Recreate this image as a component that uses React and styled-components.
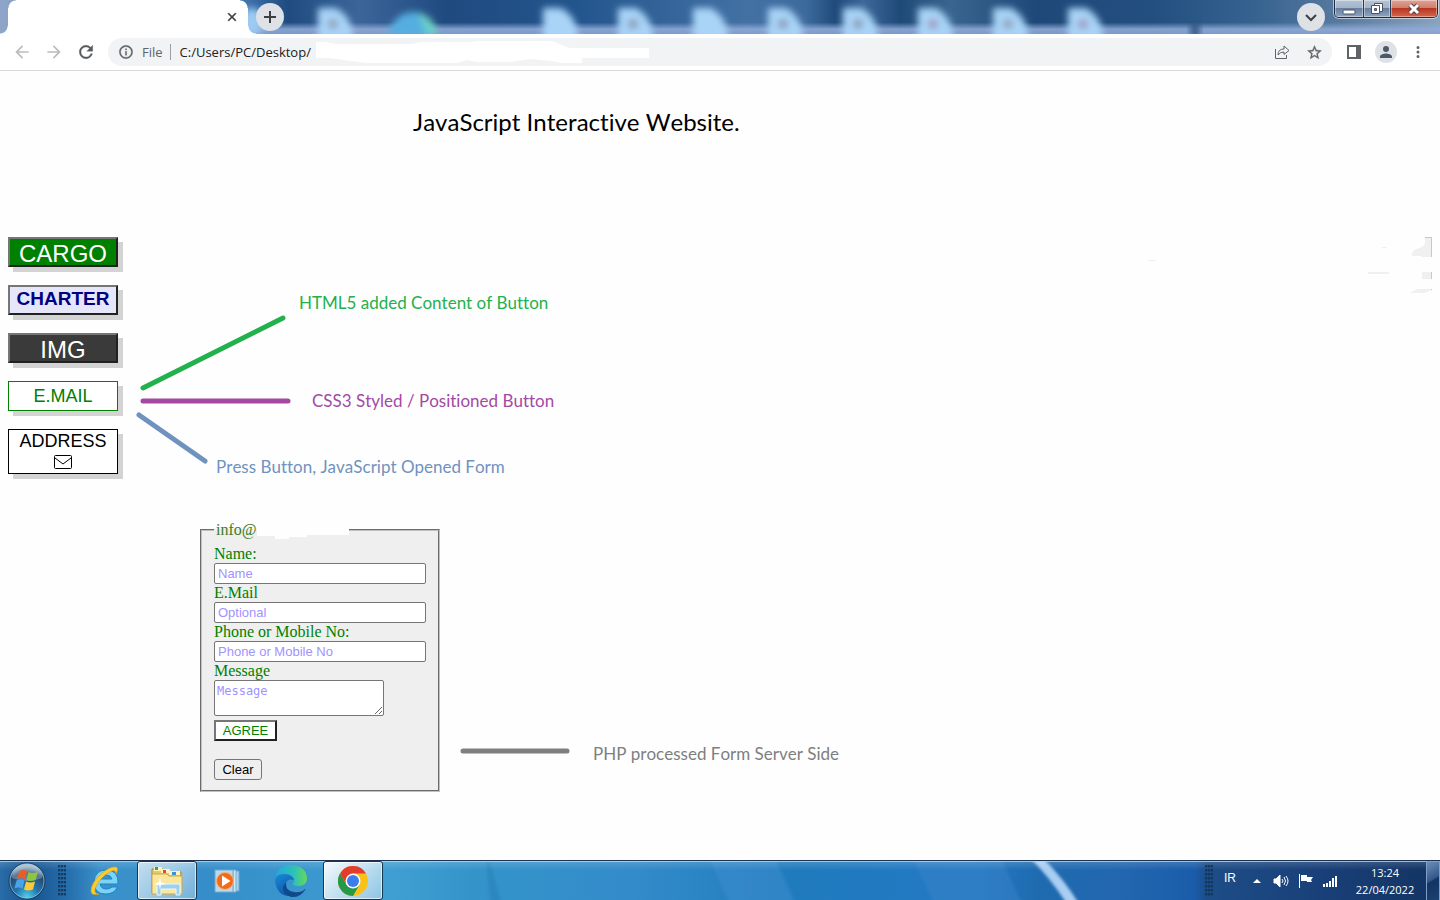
import React from "react";
import styled, { createGlobalStyle, css } from "styled-components";

const sans = `"Liberation Sans", Arial, sans-serif`;
const serif = `"Liberation Serif", "Times New Roman", serif`;
const ui = `"Open Sans", "Noto Sans", sans-serif`;
const note = `Lato, sans-serif`;

const GlobalStyle = createGlobalStyle`
  * { box-sizing: border-box; }
  body { margin: 0; background: #fefefe; font-family: ${serif}; }
  button, input, textarea { margin: 0; }
`;

const Screen = styled.div`
  display: flex;
  flex-direction: column;
  min-height: 100vh;
`;

/* ---------- browser tab strip ---------- */

const Layered = styled.div`
  display: grid;
  grid-template-columns: minmax(0, 1fr);
  height: ${(p) => p.$height}px;
  overflow: hidden;
  > * { grid-area: 1 / 1; }
`;

const Scenery = styled.svg`
  display: block;
  width: 100%;
  height: 100%;
`;

const TabStrip = styled.header`
  position: relative;
  display: flex;
  align-items: flex-start;
`;

const TabShape = styled.div`
  display: flex;
  align-items: center;
  justify-content: flex-end;
  width: 256px;
  height: 34px;
  padding-right: 14px;
  background:
    radial-gradient(circle at 0 0, transparent 7px, #fff 8px) left bottom / 8px 8px no-repeat,
    radial-gradient(circle at 100% 0, transparent 7px, #fff 8px) right bottom / 8px 8px no-repeat,
    radial-gradient(circle at 8px 8px, #fff 7px, transparent 8px) 8px 0 / 8px 8px no-repeat,
    radial-gradient(circle at 0 8px, #fff 7px, transparent 8px) 240px 0 / 8px 8px no-repeat,
    linear-gradient(#fff, #fff) 16px 0 / 224px 34px no-repeat,
    linear-gradient(#fff, #fff) 8px 8px / 240px 26px no-repeat;
`;

const PlainButton = styled.button`
  display: flex;
  align-items: center;
  justify-content: center;
  width: ${(p) => p.$width || 32}px;
  height: ${(p) => p.$height || 28}px;
  padding: 0;
  border: 0;
  background: none;
  color: ${(p) => p.$color || "#5f6368"};
`;

const RoundButton = styled(PlainButton)`
  width: 28px;
  margin-top: 3px;
  border-radius: 50%;
  background: #dee1e6;
  color: #3c4043;
`;

const WindowSide = styled.div`
  display: flex;
  gap: 9px;
  margin-left: auto;
  padding-right: 2px;
`;

const WindowControls = styled.div`
  display: flex;
  height: 18px;
  border: 1px solid #1d2c43;
  border-top: 0;
  border-radius: 0 0 5px 5px;
  box-shadow: 0 0 0 1px rgba(255, 255, 255, 0.55);
  overflow: hidden;
`;

const WindowControl = styled(PlainButton)`
  height: 17px;
  background: linear-gradient(#b4c3d5 0, #a5b5c8 45%, #68809f 50%, #8fa6c0 100%);
  box-shadow: inset 0 0 0 1px rgba(255, 255, 255, 0.4);
  & + & { border-left: 1px solid #2b3a50; }
  ${(p) =>
    p.$close &&
    css`
      background: linear-gradient(#e0a295 0, #cf8070 45%, #b93621 50%, #d4664c 100%);
    `}
`;

/* ---------- browser toolbar ---------- */

const Toolbar = styled.div`
  display: flex;
  align-items: center;
  height: 37px;
  padding: 0 6px;
  border-bottom: 1px solid #d9dadb;
  background: #fff;
`;

const AddressBar = styled.div`
  display: flex;
  flex: 1;
  align-items: center;
  height: 28px;
  margin: 0 6px;
  padding: 0 2px 0 10px;
  border-radius: 14px;
  background: #f1f3f4;
  color: #5f6368;
  font: 13px/20px ${ui};
`;

const Scheme = styled.span`
  margin-left: 8px;
  padding-right: 7px;
  border-right: 1px solid #9aa0a6;
  line-height: 16px;
`;

const Url = styled.input`
  width: 136px;
  margin-left: 9px;
  padding: 0;
  border: 0;
  background: none;
  color: #202124;
  font: inherit;
`;

const Spacer = styled.div`
  flex: 1;
`;

/* ---------- web page ---------- */

const Page = styled.main`
  flex: 1;
  padding: 35px 8px 0;
`;

const noteText = css`
  font-family: ${note};
  font-kerning: none;
  font-variant-ligatures: none;
`;

const Title = styled.h1`
  margin: 0 0 99px 405px;
  color: #000;
  font-size: 24px;
  font-weight: 400;
  line-height: 32px;
  ${noteText}
`;

const Upper = styled.div`
  display: flex;
  align-items: flex-start;
`;

const Menu = styled.nav`
  display: flex;
  flex-direction: column;
  gap: 18px;
  width: 110px;
`;

const MenuButton = styled.button`
  display: flex;
  flex-direction: column;
  align-items: center;
  height: ${(p) => p.$height || 30}px;
  padding: 0;
  border: ${(p) => p.$border || "2px outset #767676"};
  background: ${(p) => p.$fill || "#fff"};
  box-shadow: 5px 5px 0 lightgray;
  color: ${(p) => p.$color || "#fff"};
  font: ${(p) => p.$font || "24px/30px"} ${sans};
  svg { flex: none; margin-top: 3px; }
`;

const Callouts = styled.div`
  display: flex;
  flex-direction: column;
  padding: 54px 0 0 17px;
`;

const Callout = styled.div`
  display: flex;
  align-items: ${(p) => p.$align || "flex-end"};
  gap: ${(p) => p.$gap}px;
  height: ${(p) => p.$height}px;
  color: ${(p) => p.$color};
  font-size: 17px;
  line-height: 24px;
  ${noteText}
  white-space: nowrap;
  svg { flex: none; display: block; }
`;

const Scraps = styled.svg`
  margin-left: auto;
`;

const Lower = styled.div`
  display: flex;
  align-items: flex-end;
  gap: 20px;
  margin: 42px 0 0 192px;
`;

const Fields = styled.fieldset`
  width: 240px;
  min-width: 0;
  margin: 0;
  padding: 6px 12px 10px;
  border: 2px groove #c0c0c0;
  background: #efefef;
  color: green;
  font: 16px/18px ${serif};
`;

const Legend = styled.legend`
  display: flex;
  padding: 0 0 0 2px;
  color: #3d7d1c;
`;

const Label = styled.label`
  display: block;
`;

const field = css`
  display: block;
  border: 1px solid #767676;
  border-radius: 2px;
  background: #fff;
  &::placeholder { color: #9f93ff; opacity: 1; }
`;

const TextInput = styled.input`
  ${field}
  width: 100%;
  height: 21px;
  padding: 1px 3px;
  font: 13px/16px ${sans};
`;

const MessageBox = styled.textarea`
  ${field}
  width: 170px;
  height: 36px;
  padding: 2px;
  font: 12px/16px "DejaVu Sans Mono", monospace;
  resize: both;
`;

const FormButton = styled.button`
  display: block;
  width: ${(p) => p.$width}px;
  height: 21px;
  margin-top: ${(p) => p.$top}px;
  padding: 0;
  border: ${(p) => (p.$raised ? "2px outset #767676" : "1px solid #767676")};
  border-radius: ${(p) => (p.$raised ? 0 : 3)}px;
  background: ${(p) => (p.$raised ? "#fff" : "#efefef")};
  color: ${(p) => (p.$raised ? "green" : "#000")};
  font: 13px/16px ${sans};
`;

/* ---------- taskbar ---------- */

const Taskbar = styled.footer`
  position: relative;
  display: flex;
  align-items: center;
  border-top: 1px solid #1b3350;
  box-shadow: inset 0 1px 0 rgba(190, 220, 245, 0.75);
`;

const StartButton = styled(PlainButton)`
  width: 54px;
  height: 38px;
  margin-right: 4px;
`;

const Grip = styled.div`
  width: 8px;
  height: 31px;
  background: radial-gradient(circle at 1px 1px, #12304f 1px, transparent 2px) 0 0 / 3px 4px;
  opacity: 0.8;
`;

const Apps = styled.div`
  display: flex;
  gap: 2px;
  margin-left: 9px;
`;

const AppButton = styled(PlainButton)`
  width: 60px;
  height: 39px;
  ${(p) =>
    p.$open &&
    css`
      border: 1px solid #16364f;
      border-radius: 3px;
      background: linear-gradient(135deg, rgba(255, 255, 255, ${p.$open}), rgba(225, 240, 250, ${p.$open / 2}));
      box-shadow: inset 0 0 0 1px rgba(255, 255, 255, 0.65);
    `}
`;

const Tray = styled.div`
  display: flex;
  align-items: center;
  margin-left: auto;
  color: #fff;
  font: 11px/17px ${ui};
`;

const Language = styled.span`
  width: 34px;
  padding: 0 0 6px 11px;
  font: 12px/16px ${sans};
`;

const Clock = styled.time`
  width: 60px;
  margin: 0 11px 0 12px;
  text-align: center;
`;

const ShowDesktop = styled(PlainButton)`
  width: 14px;
  height: 39px;
  border: 1px solid #7f9fc4;
  border-bottom: 0;
  background: linear-gradient(150deg, #6d8fb8 0, #35588c 45%, #123465 50%, #1b4272 100%);
`;

/* ---------- drawings ---------- */

const Icon = ({ size = 20, d, weight = 0 }) => (
  <svg width={size} height={size} viewBox="0 0 24 24" fill="currentColor" stroke="currentColor" strokeWidth={weight} aria-hidden="true">
    <path d={d} />
  </svg>
);

const paths = {
  back: "M20 11H7.83l5.59-5.59L12 4l-8 8 8 8 1.41-1.41L7.83 13H20v-2z",
  forward: "M4 11h12.17l-5.59-5.59L12 4l8 8-8 8-1.41-1.41L16.17 13H4v-2z",
  reload:
    "M17.65 6.35A7.96 7.96 0 0 0 12 4c-4.42 0-7.99 3.58-7.99 8s3.57 8 7.99 8c3.73 0 6.84-2.55 7.73-6h-2.08A5.99 5.99 0 0 1 12 18c-3.31 0-6-2.69-6-6s2.69-6 6-6c1.66 0 3.14.69 4.22 1.78L13 11h7V4l-2.35 2.35z",
  info: "M11 7h2v2h-2zm0 4h2v6h-2zm1-9C6.48 2 2 6.48 2 12s4.48 10 10 10 10-4.48 10-10S17.52 2 12 2zm0 18c-4.41 0-8-3.59-8-8s3.59-8 8-8 8 3.59 8 8-3.59 8-8 8z",
  star: "M22 9.24l-7.19-.62L12 2 9.19 8.63 2 9.24l5.46 4.73L5.82 21 12 17.27 18.18 21l-1.63-7.03L22 9.24zM12 15.4l-3.76 2.27 1-4.28-3.32-2.88 4.38-.38L12 6.1l1.71 4.04 4.38.38-3.32 2.88 1 4.28L12 15.4z",
  person: "M12 12a4 4 0 1 0 0-8 4 4 0 0 0 0 8zm0 2c-2.67 0-8 1.34-8 4v2h16v-2c0-2.66-5.33-4-8-4z",
  close: "M19 6.41L17.59 5 12 10.59 6.41 5 5 6.41 10.59 12 5 17.59 6.41 19 12 13.41 17.59 19 19 17.59 13.41 12z",
  dots: "M12 8a2 2 0 1 0 0-4 2 2 0 0 0 0 4zm0 2a2 2 0 1 0 0 4 2 2 0 0 0 0-4zm0 6a2 2 0 1 0 0 4 2 2 0 0 0 0-4z",
};

const desktopFiles = [
  [318, "#8d9db5"], [543], [618, "#8795b4"], [693], [768, "#8795b4"], [843, "#8795b4"],
  [918, "#a093c0"], [993, "#8d9db5"], [1068, "#a093c0"],
];

const StripScenery = () => (
  <Scenery viewBox="0 0 1440 34" preserveAspectRatio="none" aria-hidden="true">
    <defs>
      <linearGradient id="sky">
        <stop offset="0" stopColor="#8fa5ca" />
        <stop offset="0.17" stopColor="#3f73ac" />
        <stop offset="0.2" stopColor="#1f4b80" />
        <stop offset="0.25" stopColor="#3c669a" />
        <stop offset="0.31" stopColor="#1f4a80" />
        <stop offset="0.4" stopColor="#23558d" />
        <stop offset="0.52" stopColor="#4371a4" />
        <stop offset="0.56" stopColor="#3d6a9d" />
        <stop offset="0.58" stopColor="#1f4b7b" />
        <stop offset="0.6" stopColor="#3d6799" />
        <stop offset="0.625" stopColor="#1e4a78" />
        <stop offset="0.66" stopColor="#39658f" />
        <stop offset="0.72" stopColor="#1e4878" />
        <stop offset="0.8" stopColor="#234f80" />
        <stop offset="0.87" stopColor="#35628f" />
        <stop offset="0.93" stopColor="#57799f" />
        <stop offset="1" stopColor="#8aa3bd" />
      </linearGradient>
      <linearGradient id="haze" x2="0" y2="1">
        <stop offset="0.66" stopColor="#8faad6" stopOpacity="0" />
        <stop offset="0.86" stopColor="#8faad6" stopOpacity="0.9" />
        <stop offset="1" stopColor="#86a3d0" stopOpacity="0.9" />
      </linearGradient>
      <filter id="soft" x="-40%" y="-40%" width="180%" height="180%">
        <feGaussianBlur stdDeviation="3.5" />
      </filter>
    </defs>
    <rect width="1440" height="34" fill="url(#sky)" />
    <rect x="190" width="1250" height="34" fill="url(#haze)" />
    <rect x="1191" y="22" width="8" height="16" fill="#2b4f80" filter="url(#soft)" />
    <ellipse cx="252" cy="22" rx="12" ry="14" fill="#9ccaf0" filter="url(#soft)" />
    <g filter="url(#soft)">
      <path d="M388 36a25 30 0 0 1 49 0z" fill="#55aee0" />
      <path d="M418 12q18 6 19 24h-10z" fill="#6bd0c4" />
    </g>
    {desktopFiles.map(([x, mark]) => (
      <g key={x} filter="url(#soft)">
        <path d={`M${x} 8h18q17 9 17 32h-35z`} fill="#a9d4f7" />
        {mark && <circle cx={x + 15} cy="24" r="5" fill={mark} />}
      </g>
    ))}
  </Scenery>
);

const TaskbarScenery = () => (
  <Scenery viewBox="0 0 1440 40" preserveAspectRatio="none" aria-hidden="true">
    <defs>
      <linearGradient id="bar">
        <stop offset="0" stopColor="#2a6da8" />
        <stop offset="0.02" stopColor="#16528c" />
        <stop offset="0.05" stopColor="#2872b0" />
        <stop offset="0.07" stopColor="#3b91ca" />
        <stop offset="0.15" stopColor="#358ec9" />
        <stop offset="0.27" stopColor="#409fd2" />
        <stop offset="0.33" stopColor="#3494ca" />
        <stop offset="0.44" stopColor="#338bc9" />
        <stop offset="0.55" stopColor="#207bbd" />
        <stop offset="0.68" stopColor="#2379c4" />
        <stop offset="0.72" stopColor="#1f6bb0" />
        <stop offset="0.78" stopColor="#2266af" />
        <stop offset="0.83" stopColor="#1a5ca9" />
        <stop offset="0.838" stopColor="#1d4d87" />
        <stop offset="0.92" stopColor="#193f78" />
        <stop offset="1" stopColor="#123462" />
      </linearGradient>
      <linearGradient id="sheen" x2="0" y2="1">
        <stop offset="0" stopColor="#fff" stopOpacity="0.18" />
        <stop offset="0.25" stopColor="#fff" stopOpacity="0" />
      </linearGradient>
      <filter id="mist" x="-40%" y="-20%" width="180%" height="140%">
        <feGaussianBlur stdDeviation="1.6" />
      </filter>
    </defs>
    <rect width="1440" height="40" fill="url(#bar)" />
    <g filter="url(#mist)">
      <path d="M708 -4h66l22 48h-66z" fill="#4590d1" opacity="0.4" />
      <path d="M912 -4h88l22 48h-88z" fill="#4185c8" opacity="0.4" />
      <path d="M488 -4l14 48h-12l-4 -48z" fill="#2379b2" opacity="0.45" />
      <path d="M1028 -4h13q24 24 38 48h-12q-18 -28 -39 -48z" fill="#a9cef2" />
    </g>
    <rect width="1440" height="40" fill="url(#sheen)" />
  </Scenery>
);

const StartOrb = () => (
  <svg width="38" height="38" viewBox="0 0 38 38" aria-hidden="true">
    <defs>
      <radialGradient id="orb" cx="0.5" cy="0.95" r="0.85">
        <stop offset="0" stopColor="#4fd0ee" />
        <stop offset="0.4" stopColor="#2474ac" />
        <stop offset="0.8" stopColor="#24496e" />
        <stop offset="1" stopColor="#8eb0c8" />
      </radialGradient>
    </defs>
    <circle cx="19" cy="19" r="18" fill="url(#orb)" stroke="#17385c" />
    <circle cx="19" cy="19" r="17" fill="none" stroke="#9dc6e0" opacity="0.7" />
    <path d="M4 16a15 14 0 0 1 30 0q-15 6-30 0z" fill="#fff" opacity="0.25" />
    <path d="M11.500 9q4-2 7.500 0l-2 8q-4-2-8 0z" fill="#ee5a24" />
    <path d="M20.500 10q4 2 9.500 0l-2.500 8q-5 2-9 0z" fill="#8cc63f" />
    <path d="M8.500 18.500q4-2 8 0l-2 8q-4-2-8 0z" fill="#4aa3e8" />
    <path d="M18 19.500q4 2 9 0l-2 8q-5 2-9 0z" fill="#fdc93b" />
  </svg>
);

const ExplorerE = () => (
  <svg width="34" height="34" viewBox="0 0 34 34" aria-hidden="true">
    <path
      d="M30 20H12q1 5 6 5 4 0 6-2h5.500q-3 7-12 7Q6 30 6 18 7 6 18 6q13 0 12 14zm-18-5h12q-1-4-6-4t-6 4z"
      fill="#7bd4f8" stroke="#1d83c4" strokeWidth="1"
    />
    <path d="M28 10q3-6 0-7-6-1-15 7Q3 19 3 27q0 5 8 3-5 0-4-5 2-7 9-13 9-7 11-5 1 1 1 3z" fill="#fbcb2f" stroke="#dc9d12" strokeWidth="0.6" />
  </svg>
);

const Folder = () => (
  <svg width="34" height="32" viewBox="0 0 34 32" aria-hidden="true">
    <path d="M2 4h11v3h18v21H2z" fill="#e8c86f" stroke="#a98936" />
    <path d="M4 2h8v4H4z" fill="#fff3b5" /><path d="M5 2h3v3H5z" fill="#2aa84a" />
    <path d="M11 4h9v4h-9z" fill="#fff3b5" /><path d="M13 5h3v3h-3z" fill="#df4b32" />
    <path d="M19 6h11v4H19z" fill="#fff3b5" /><path d="M22 7h4v3h-4z" fill="#3893df" />
    <path d="M2 9h15l2 2h13v18H2z" fill="#fae69c" stroke="#caa751" />
    <path d="M7 30V19h23v11h-4v-6H11v6z" fill="#9dd2ee" stroke="#e7f7ff" />
    <path d="M10 12l1 5 5 2-5 1-1 5-1-5-5-1 5-2z" fill="#fff" opacity="0.9" />
  </svg>
);

const MediaPlayer = () => (
  <svg width="32" height="28" viewBox="0 0 32 28" aria-hidden="true">
    <path d="M22 4h4v20h-4z" fill="#a8d4ee" stroke="#6fa9cd" />
    <path d="M20 3h3v22h-3z" fill="#cde8f6" stroke="#74acd0" />
    <path d="M2 3h18v22H2z" fill="#b6d9ee" stroke="#76aacb" />
    <circle cx="12" cy="14" r="8.500" fill="#f36b18" stroke="#f9b27c" />
    <path d="M9 8.500l8.500 5.500L9 19.500z" fill="#fff" />
  </svg>
);

const EdgeLogo = () => (
  <svg width="34" height="34" viewBox="0 0 34 34" aria-hidden="true">
    <defs>
      <linearGradient id="edgeTop"><stop offset="0" stopColor="#24a5df" /><stop offset="0.6" stopColor="#2dc2b8" /><stop offset="1" stopColor="#67d951" /></linearGradient>
      <linearGradient id="edgeLow" x2="0.6" y2="1"><stop offset="0" stopColor="#1a8bd8" /><stop offset="1" stopColor="#0c55a4" /></linearGradient>
    </defs>
    <path d="M1 17Q2 1 17 1q15 1 16 13 0 8-9 8-6 0-5-3 3-3 0-6-7-7-18 4z" fill="url(#edgeTop)" />
    <path d="M1 17q0-7 9-7 8 0 10 6-7-2-8 4 0 9 10 11Q4 36 1 17z" fill="url(#edgeLow)" />
    <path d="M12 19q-1 8 8 9 7 1 11-3 1-1 0 1-5 8-14 7-9-3-8-10 1-3 3-4z" fill="#114a8c" />
  </svg>
);

const ChromeLogo = () => (
  <svg width="30" height="30" viewBox="0 0 30 30" aria-hidden="true">
    <circle cx="15" cy="15" r="15" fill="#fbc116" />
    <path d="M2 7.500A15 15 0 0 1 28 7.500H15l-6.500 11.250z" fill="#e33b2e" />
    <path d="M2 7.500A15 15 0 0 0 15 30l6.500-11.250h-13z" fill="#279847" />
    <circle cx="15" cy="15" r="7.500" fill="#fff" />
    <circle cx="15" cy="15" r="6" fill="#3b7ded" />
  </svg>
);

const UrlSmudge = () => (
  <svg width="333" height="22" viewBox="0 0 333 22" aria-hidden="true">
    <path d="M0 1h10l8 2h78l8-2h51l8-1h16l9-2h40l10 3 16 6h79v10h-67v5h-20l-10-2-22-2-20 3h-34l-9-2-10 3H51l-17-2-20-3H0z" fill="#fff" />
  </svg>
);

const Stroke = ({ width, height, from, to }) => (
  <svg width={width} height={height} aria-hidden="true">
    <line x1={from[0]} y1={from[1]} x2={to[0]} y2={to[1]} stroke="currentColor" strokeWidth="5" strokeLinecap="round" />
  </svg>
);

export default function App() {
  return (
    <Screen>
      <GlobalStyle />
      <Layered $height={34}>
        <StripScenery />
        <TabStrip>
          <TabShape>
            <PlainButton $width={20} $height={20} $color="#3c4043" aria-label="Close tab">
              <Icon size={14} d={paths.close} weight={1} />
            </PlainButton>
          </TabShape>
          <RoundButton aria-label="New tab">
            <svg width="14" height="14" stroke="currentColor" strokeWidth="2"><path d="M1 7h12M7 1v12" /></svg>
          </RoundButton>
          <WindowSide>
            <RoundButton aria-label="Search tabs">
              <svg width="14" height="9" fill="none" stroke="currentColor" strokeWidth="2"><path d="M2 2l5 5 5-5" /></svg>
            </RoundButton>
            <WindowControls>
              <WindowControl $width={28} aria-label="Minimize">
                <svg width="14" height="14"><rect x="1" y="8" width="12" height="4" rx="1" fill="#fff" stroke="#4b5268" /></svg>
              </WindowControl>
              <WindowControl $width={27} aria-label="Restore">
                <svg width="14" height="14" fill="#fff" stroke="#4b5268"><path d="M4.500 1.500h8v8h-8z" /><path d="M1.500 3.500h8v8h-8z" /><path d="M4.500 6.500h2v2h-2z" fill="#7890ae" /></svg>
              </WindowControl>
              <WindowControl $width={47} $close aria-label="Close">
                <svg width="14" height="12"><path d="M3 2l8 8M11 2l-8 8" stroke="#54414b" strokeWidth="5" /><path d="M3 2l8 8M11 2l-8 8" stroke="#fff" strokeWidth="3" /></svg>
              </WindowControl>
            </WindowControls>
          </WindowSide>
        </TabStrip>
      </Layered>

      <Toolbar>
        <PlainButton $color="#babcbe" aria-label="Back"><Icon d={paths.back} /></PlainButton>
        <PlainButton $color="#babcbe" aria-label="Forward"><Icon d={paths.forward} /></PlainButton>
        <PlainButton $color="#55595e" aria-label="Reload"><Icon d={paths.reload} weight={0.4} /></PlainButton>
        <AddressBar>
          <Icon size={16} d={paths.info} weight={0.4} />
          <Scheme>File</Scheme>
          <Url aria-label="Address" defaultValue="C:/Users/PC/Desktop/" />
          <UrlSmudge />
          <Spacer />
          <PlainButton aria-label="Share">
            <svg width="16" height="16" fill="none" stroke="currentColor"><path d="M1.500 5v9.500h11V11M4 11q0-6 6-6V2l5 4.500-5 4V8q-4 0-6 3z" /></svg>
          </PlainButton>
          <PlainButton aria-label="Bookmark"><Icon size={17} d={paths.star} weight={0.4} /></PlainButton>
        </AddressBar>
        <PlainButton aria-label="Side panel">
          <svg width="14" height="14"><path d="M0 0h14v14H0zM2 2v10h7V2z" fill="currentColor" fillRule="evenodd" /></svg>
        </PlainButton>
        <PlainButton aria-label="Profile" $color="#4f586b">
          <svg width="22" height="22" viewBox="0 0 22 22"><circle cx="11" cy="11" r="11" fill="#dee1e6" /><g transform="translate(2 2) scale(.75)" fill="currentColor"><path d={paths.person} /></g></svg>
        </PlainButton>
        <PlainButton aria-label="Menu"><Icon size={18} d={paths.dots} /></PlainButton>
      </Toolbar>

      <Page>
        <Title>JavaScript Interactive Website.</Title>
        <Upper>
          <Menu>
            <MenuButton $fill="green">CARGO</MenuButton>
            <MenuButton $fill="lavender" $color="navy" $font="bold 19px/24px">CHARTER</MenuButton>
            <MenuButton $fill="#3a3a3a">IMG</MenuButton>
            <MenuButton $border="1px solid green" $color="green" $font="18px/28px">E.MAIL</MenuButton>
            <MenuButton $height={45} $border="1px solid #000" $color="#000" $font="18px/22px">
              ADDRESS
              <svg width="18" height="14" fill="none" stroke="currentColor"><rect x="0.500" y="0.500" width="17" height="13" rx="1" /><path d="M1 3l8 6 8-6" /></svg>
            </MenuButton>
          </Menu>
          <Callouts>
            <Callout $height={101} $gap={9} $align="flex-start" $color="#22b14c">
              <Stroke width={155} height={100} from={[8, 97]} to={[148, 27]} />
              HTML5 added Content of Button
            </Callout>
            <Callout $height={18} $gap={17} $align="center" $color="#a349a4">
              <Stroke width={160} height={7} from={[8, 3]} to={[153, 3]} />
              CSS3 Styled / Positioned Button
            </Callout>
            <Callout $height={69} $gap={5} $color="#7092be">
              <Stroke width={76} height={69} from={[4, 5]} to={[70, 51]} />
              Press Button, JavaScript Opened Form
            </Callout>
          </Callouts>
          <Scraps width="290" height="60" viewBox="0 0 290 60" fill="#f0f0f0" aria-hidden="true">
            <path d="M283 0h7v20h-11v-1h-9v-2l2-4 8-3 3-3zM280 35h10v7h-10zM276 52h14v1l-8 3h-13v-1zM226 35h21v2h-21zM240 10h5v1h-5zM6 23h8v1H6z" />
            <path d="M283 0h7v20h-1V1h-6zM289 35h1v7h-1zM289 52h1v1h-1z" fill="#c8c8c8" />
          </Scraps>
        </Upper>
        <Lower>
          <Fields>
            <Legend>
              info@
              <svg width="92" height="18" aria-hidden="true"><path d="M0 0h92v14H50v2H32v3H18v-4H0z" fill="#fefefe" /></svg>
            </Legend>
            <Label htmlFor="name">Name:</Label>
            <TextInput id="name" placeholder="Name" />
            <Label htmlFor="email">E.Mail</Label>
            <TextInput id="email" placeholder="Optional" />
            <Label htmlFor="phone">Phone or Mobile No:</Label>
            <TextInput id="phone" placeholder="Phone or Mobile No" />
            <Label htmlFor="message">Message</Label>
            <MessageBox id="message" placeholder="Message" />
            <FormButton type="button" $raised $width={63} $top={4}>AGREE</FormButton>
            <FormButton type="reset" $width={48} $top={18}>Clear</FormButton>
          </Fields>
          <Callout $height={50} $gap={21} $align="flex-start" $color="#7f7f7f">
            <Stroke width={112} height={18} from={[3, 9]} to={[107, 9]} />
            PHP processed Form Server Side
          </Callout>
        </Lower>
      </Page>

      <Layered $height={40}>
        <TaskbarScenery />
        <Taskbar>
          <StartButton aria-label="Start"><StartOrb /></StartButton>
          <Grip />
          <Apps>
            <AppButton aria-label="Internet Explorer"><ExplorerE /></AppButton>
            <AppButton $open={0.7} aria-label="File Explorer"><Folder /></AppButton>
            <AppButton aria-label="Media Player"><MediaPlayer /></AppButton>
            <AppButton aria-label="Edge"><EdgeLogo /></AppButton>
            <AppButton $open={0.95} aria-label="Chrome"><ChromeLogo /></AppButton>
          </Apps>
          <Tray>
            <Grip />
            <Language>IR</Language>
            <PlainButton $width={20} $color="#fff" aria-label="Show hidden icons"><svg width="8" height="4"><path d="M0 4l4-4 4 4z" fill="currentColor" /></svg></PlainButton>
            <PlainButton $width={28} $color="#fff" aria-label="Volume">
              <svg width="16" height="14" fill="none" stroke="currentColor"><path d="M1 5h2l4-4v12l-4-4H1z" fill="currentColor" /><path d="M9 5q2 2 0 4M11 3q3 4 0 8M13 2q4 5 0 10" /></svg>
            </PlainButton>
            <PlainButton $width={22} $color="#fff" aria-label="Action center">
              <svg width="16" height="14" fill="currentColor"><path d="M1 0h1v14H1zM3 1h6v2h6l-2 3 1 2H9V7H3z" /></svg>
            </PlainButton>
            <PlainButton $width={26} $color="#fff" aria-label="Network">
              <svg width="15" height="12" fill="currentColor"><path d="M0 9h2v3H0zM3 8h2v4H3zM6 6h2v6H6zM9 3h2v9H9zM12 1h2v11h-2z" /></svg>
            </PlainButton>
            <Clock>13:24<br />22/04/2022</Clock>
            <ShowDesktop aria-label="Show desktop" />
          </Tray>
        </Taskbar>
      </Layered>
    </Screen>
  );
}
